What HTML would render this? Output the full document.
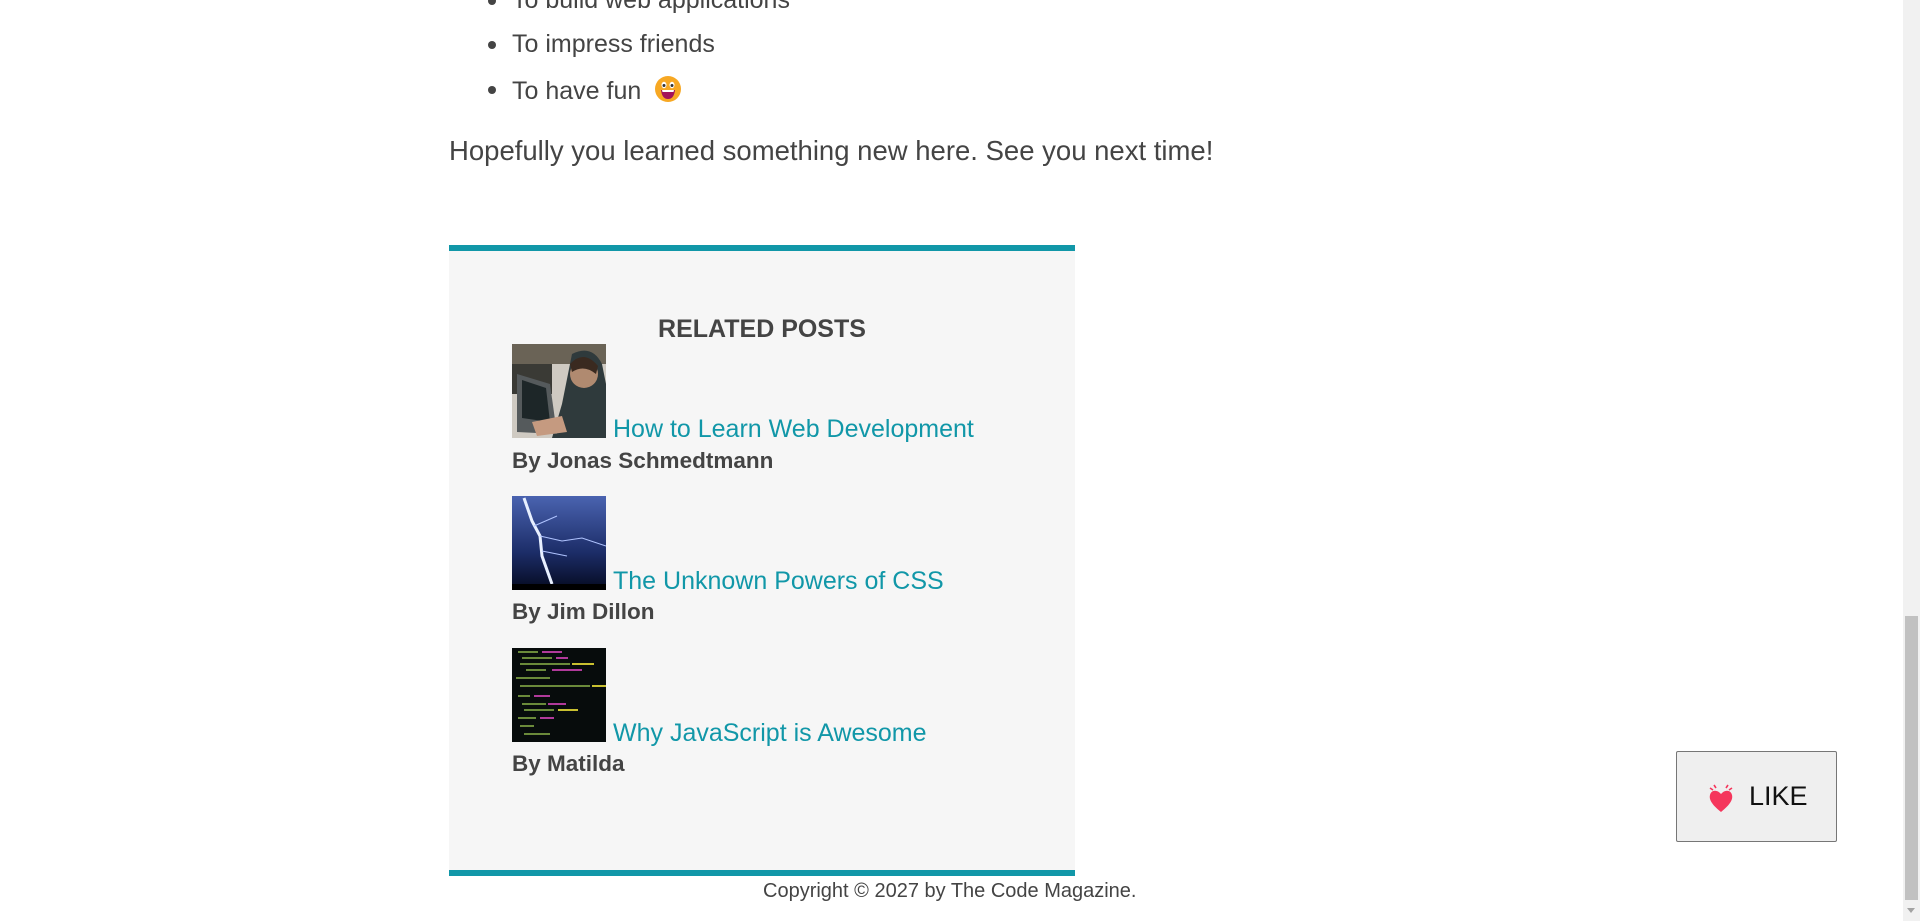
<!DOCTYPE html>
<html><head><meta charset="utf-8"><style>
body{margin:0;width:1920px;height:921px;overflow:hidden;background:#fff;font-family:"Liberation Sans",Arial,sans-serif;color:#444;position:relative}
.a{position:absolute;white-space:nowrap}
li{position:absolute;white-space:nowrap;font-size:25px;list-style:none}
.dot{position:absolute;left:-24px;top:11px;width:8px;height:8px;border-radius:50%;background:#444}
.panel{position:absolute;left:449px;top:245px;width:626px;height:631px;background:#f6f6f6;border-top:6px solid #1197a8;border-bottom:6px solid #1197a8;box-sizing:border-box}
.img{position:absolute;left:512px;width:94px;height:94px}
.lnk{position:absolute;left:613px;font-size:25px;color:#1197a8;white-space:nowrap}
.by{position:absolute;left:512px;font-size:22.5px;font-weight:bold;color:#444;white-space:nowrap}
</style></head><body>
<ul style="margin:0;padding:0">
<li style="left:512px;top:-14px"><span class="dot"></span>To build web applications</li>
<li style="left:512px;top:30px"><span class="dot"></span>To impress friends</li>
<li style="left:512px;top:75px"><span class="dot"></span>To have fun <svg width="28" height="28" viewBox="0 0 28 28" style="vertical-align:-4px;margin-left:6px"><circle cx="14" cy="14" r="13" fill="#f7a823"/><ellipse cx="10" cy="10" rx="2.5" ry="3.2" fill="#fff"/><ellipse cx="18" cy="10" rx="2.5" ry="3.2" fill="#fff"/><circle cx="10" cy="10.5" r="1.5" fill="#333"/><circle cx="18" cy="10.5" r="1.5" fill="#333"/><path d="M7 15 Q14 15 21 15 Q20 24 14 24 Q8 24 7 15Z" fill="#a3125a"/><path d="M8 15 L20 15 L19.5 17 L8.5 17Z" fill="#fff"/></svg></li>
</ul>
<div class="a" style="left:449px;top:135px;font-size:27.5px;color:#444">Hopefully you learned something new here. See you next time!</div>
<div class="panel"></div>
<div class="a" style="left:449px;width:626px;text-align:center;top:315px;font-size:25px;font-weight:bold;color:#444">RELATED POSTS</div>

<svg class="img" style="top:344px" viewBox="0 0 94 94"><rect width="94" height="94" fill="#cfcac2"/><rect width="40" height="50" fill="#3a3a35"/><rect x="0" y="0" width="94" height="20" fill="#6a6356"/><path d="M60 10 Q80 0 90 20 L94 40 L94 94 L40 94 L50 60 Z" fill="#2f3a3c"/><circle cx="72" cy="30" r="14" fill="#b08a70"/><path d="M58 20 Q72 5 86 22 L84 30 Q72 20 60 28Z" fill="#3a2a20"/><path d="M5 30 L38 40 L45 90 L5 88Z" fill="#555a5c"/><path d="M10 36 L34 44 L38 78 L10 74Z" fill="#1d2628"/><path d="M20 78 L50 72 L55 88 L25 92Z" fill="#c59a80"/></svg>
<div class="lnk" style="top:415px">How to Learn Web Development</div>
<div class="by" style="top:448px">By Jonas Schmedtmann</div>

<svg class="img" style="top:496px" viewBox="0 0 94 94"><defs><linearGradient id="g" x1="0" y1="0" x2="0" y2="1"><stop offset="0" stop-color="#4a63b0"/><stop offset="0.6" stop-color="#1c2d68"/><stop offset="1" stop-color="#050a20"/></linearGradient></defs><rect width="94" height="94" fill="url(#g)"/><path d="M12 2 L20 25 L28 40 L30 60 L40 88" stroke="#e8f0ff" stroke-width="3" fill="none"/><path d="M28 40 L50 45 L70 42 L94 50 M22 30 L45 20 M30 55 L55 60" stroke="#b0c4ff" stroke-width="1" fill="none"/><rect y="88" width="94" height="6" fill="#000"/></svg>
<div class="lnk" style="top:567px">The Unknown Powers of CSS</div>
<div class="by" style="top:599px">By Jim Dillon</div>

<svg class="img" style="top:648px" viewBox="0 0 94 94"><rect width="94" height="94" fill="#070c0c"/><g stroke-width="2"><path d="M6 4h20M10 10h30M8 16h50M14 22h20M4 30h34M8 38h70M6 48h12M10 56h24M12 62h30M6 70h18M8 78h14M12 86h26" stroke="#6a8a3a"/><path d="M30 4h20M44 10h12M40 22h30M22 48h16M36 56h18M28 70h14" stroke="#b03a9a"/><path d="M60 16h22M80 38h14M46 62h20" stroke="#c8c030"/></g></svg>
<div class="lnk" style="top:719px">Why JavaScript is Awesome</div>
<div class="by" style="top:751px">By Matilda</div>

<div class="a" style="left:763px;top:880px;font-size:20px;color:#444">Copyright © 2027 by The Code Magazine.</div>

<div class="a" style="left:1676px;top:751px;width:161px;height:91px;box-sizing:border-box;background:#efefef;border:1px solid #767676;border-radius:2px">
<svg style="position:absolute;left:30px;top:30px" width="28" height="32" viewBox="0 0 28 32"><path d="M14 30 C4 22 2 17 3 13 C4 8 10 7 14 12 C18 7 24 8 25 13 C26 17 24 22 14 30Z" fill="#f5365c"/><path d="M3 6 L6 8 M7 3 L9 6 M25 6 L22 8 M21 3 L19 6" stroke="#f5365c" stroke-width="1.6"/></svg>
<span style="position:absolute;left:72px;top:29px;font-size:27px;color:#111">LIKE</span></div>

<div class="a" style="left:1903px;top:0;width:17px;height:921px;background:#f1f1f1"></div>
<div class="a" style="left:1905px;top:616px;width:13px;height:284px;background:#c1c1c1"></div>
<div class="a" style="left:1907px;top:908px;width:0;height:0;border-left:4px solid transparent;border-right:4px solid transparent;border-top:5px solid #a3a3a3"></div>
</body></html>
